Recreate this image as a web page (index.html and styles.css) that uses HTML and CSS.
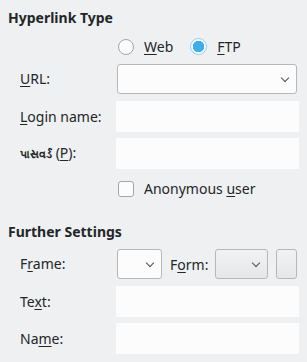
FILE: index.html
```html
<!DOCTYPE html>
<html lang="en">
<head>
    <meta charset="UTF-8">
    <title>Hyperlink</title>
    <link rel="stylesheet" href="styles.css">
</head>
<body>

<div class="dialog">
    <!-- Hyperlink Type -->
    <h3 class="group-title">Hyperlink Type</h3>
    <div class="group">
        <div class="row row-radios">
            <span></span>
            <div class="radios">
                <label class="radio"><span class="radio-mark"></span><span><u>W</u>eb</span></label>
                <label class="radio checked"><span class="radio-mark"></span><span><u>F</u>TP</span></label>
            </div>
        </div>
        <div class="row row-url">
            <label class="field-label"><u>U</u>RL:</label>
            <div class="combo wide"><span class="chevron"></span></div>
        </div>
        <div class="row row-login">
            <label class="field-label"><u>L</u>ogin name:</label>
            <div class="entry"></div>
        </div>
        <div class="row row-pass">
            <label class="field-label"><span class="gu">પાસવર્ડ</span> (<u>P</u>):</label>
            <div class="entry"></div>
        </div>
        <div class="row row-check">
            <span></span>
            <label class="check"><span class="check-mark"></span><span>Anonymous <u>u</u>ser</span></label>
        </div>
    </div>

    <!-- Further Settings -->
    <h3 class="group-title further">Further Settings</h3>
    <div class="group">
        <div class="row row-frame">
            <label class="field-label">F<u>r</u>ame:</label>
            <div class="frame-line">
                <div class="combo small"><span class="chevron"></span></div>
                <label class="inline-label">F<u>o</u>rm:</label>
                <div class="combo form"><span class="chevron"></span></div>
                <div class="tool-btn"></div>
            </div>
        </div>
        <div class="row row-text">
            <label class="field-label">Te<u>x</u>t:</label>
            <div class="entry"></div>
        </div>
        <div class="row row-name">
            <label class="field-label">Na<u>m</u>e:</label>
            <div class="entry"></div>
        </div>
    </div>
</div>

</body>
</html>
```

FILE: styles.css
```css
body {
    margin: 0;
    padding: 0;
    background-color: #eff0f1;
    font-family: "Noto Sans", "Open Sans", sans-serif;
    font-size: 14px;
    color: #232629;
}
.dialog {
    padding: 10px 8px 0 8px;
}
u {
    text-decoration-thickness: 1px;
    text-underline-offset: 2px;
}

/* Group headings */
.group-title {
    margin: 0;
    font-size: 14px;
    font-weight: bold;
    line-height: 16px;
}
.group-title.further {
    margin-top: 29px;
}

/* Form rows */
.group {
    padding-left: 12px;
}
.row {
    display: grid;
    grid-template-columns: 96px 183px;
    align-items: center;
}
.row-radios {
    margin-top: 11px;
    height: 16px;
}
.row-url {
    margin-top: 11px;
    height: 30px;
}
.row-login {
    margin-top: 7px;
    height: 31px;
}
.row-pass {
    margin-top: 6px;
    height: 31px;
}
.row-check {
    margin-top: 10px;
    height: 16px;
}
.row-frame {
    margin-top: 9px;
    height: 30px;
}
.row-text {
    margin-top: 7px;
    height: 31px;
}
.row-name {
    margin-top: 6px;
    height: 31px;
}
.field-label {
    line-height: 16px;
    white-space: nowrap;
}
.gu {
    font-size: 11px;
    font-weight: bold;
}

/* Inputs */
.entry {
    height: 31px;
    background-color: #fcfcfc;
}
.combo {
    position: relative;
    box-sizing: border-box;
    height: 30px;
    margin-left: 1px;
    border: 1px solid #b5b7b9;
    border-radius: 3px;
    background-color: #fcfcfc;
}
.combo.wide {
    width: 180px;
}
.combo.small {
    width: 45px;
}
.combo.form {
    width: 53px;
    margin-left: 0;
    background: linear-gradient(#f1f2f3, #e6e7e8);
}
.chevron {
    position: absolute;
    right: 8px;
    top: 10px;
    width: 5px;
    height: 5px;
    border-right: 1px solid #4d4f51;
    border-bottom: 1px solid #4d4f51;
    transform: rotate(45deg);
}
.frame-line {
    display: flex;
    align-items: center;
}
.inline-label {
    margin-left: 8px;
    width: 45px;
    white-space: nowrap;
}
.tool-btn {
    box-sizing: border-box;
    width: 21px;
    height: 30px;
    margin-left: 8px;
    border: 1px solid #b5b7b9;
    border-radius: 3px;
    background: linear-gradient(#f1f2f3, #e6e7e8);
}

/* Radio buttons */
.radios {
    display: flex;
    align-items: center;
    margin-left: 2px;
}
.radio {
    display: flex;
    align-items: center;
    margin-right: 17px;
}
.radio-mark {
    box-sizing: border-box;
    width: 16px;
    height: 16px;
    margin-right: 10px;
    border: 1px solid #a3a5a7;
    border-radius: 50%;
    background-color: #fcfcfc;
}
.radio.checked .radio-mark {
    border-color: #93cef0;
    background: radial-gradient(circle, #3daee9 0, #3daee9 5.5px, #fcfcfc 6px);
    width: 17px;
    height: 17px;
}

/* Checkbox */
.check {
    display: flex;
    align-items: center;
    margin-left: 2px;
}
.check-mark {
    box-sizing: border-box;
    width: 16px;
    height: 16px;
    margin-right: 10px;
    border: 1px solid #a3a5a7;
    border-radius: 3px;
    background-color: #fcfcfc;
}
```
